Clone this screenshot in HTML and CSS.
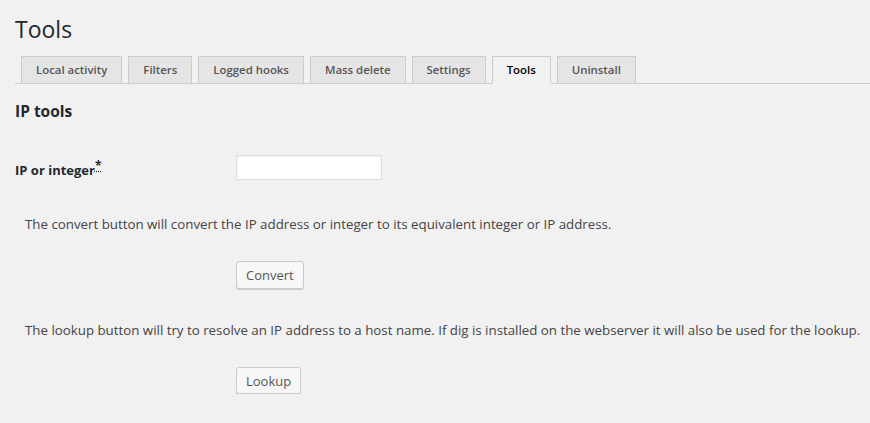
FILE: index.html
```html
<!DOCTYPE html>
<html>
<head>
<meta charset="utf-8">
<link rel="stylesheet" href="styles.css">
</head>
<body>
<div class="wrap">
  <h1 class="title">Tools</h1>
  <nav class="tabs">
    <a class="tab">Local activity</a>
    <a class="tab">Filters</a>
    <a class="tab">Logged hooks</a>
    <a class="tab">Mass delete</a>
    <a class="tab">Settings</a>
    <a class="tab active">Tools</a>
    <a class="tab">Uninstall</a>
  </nav>
  <h2 class="section">IP tools</h2>
  <div class="field">
    <label class="label">IP or integer<abbr class="req" title="required">*</abbr></label>
    <input class="input" type="text">
  </div>
  <p class="desc first">The convert button will convert the IP address or integer to its equivalent integer or IP address.</p>
  <div class="btnrow"><button class="btn convert">Convert</button></div>
  <p class="desc second">The lookup button will try to resolve an IP address to a host name. If dig is installed on the webserver it will also be used for the lookup.</p>
  <div class="btnrow"><button class="btn lookup">Lookup</button></div>
</div>
</body>
</html>
```

FILE: styles.css
```css
html, body {
  margin: 0;
  padding: 0;
  background: #f1f1f1;
}
body {
  font-family: "Open Sans", "Noto Sans", sans-serif;
  color: #444;
  font-size: 13.3px;
}
.wrap {
  padding: 0 0 0 15px;
}
.title {
  margin: 0;
  padding-top: 14px;
  font-size: 23px;
  font-weight: 400;
  line-height: 30px;
  color: #23282d;
}
.tabs {
  display: flex;
  margin-top: 12px;
  padding-left: 6px;
  border-bottom: 1px solid #ccc;
  height: 27px;
  align-items: flex-end;
  gap: 6px;
}
.tab {
  box-sizing: border-box;
  height: 28px;
  margin-bottom: -1px;
  display: flex;
  align-items: center;
  padding: 0 14px 1px;
  border: 1px solid #ccc;
  background: #e5e5e5;
  color: #555;
  font-size: 11.4px;
  font-weight: 600;
}
.tab.active {
  background: #f1f1f1;
  color: #000;
  border-bottom-color: #f1f1f1;
}
.section {
  margin: 16px 0 0;
  font-size: 15.5px;
  font-weight: 700;
  color: #23282d;
  line-height: 22px;
}
.field {
  display: flex;
  align-items: center;
  margin-top: 33px;
  height: 25px;
}
.label {
  width: 221px;
  font-weight: 700;
  color: #23282d;
  font-size: 13px;
}
.req {
  text-decoration: underline dotted;
  text-decoration-color: #23282d;
  vertical-align: 5px;
  font-size: 12px;
}
.input {
  box-sizing: border-box;
  width: 146px;
  height: 25px;
  margin: 0;
  border: 1px solid #ddd;
  background: #fff;
  box-shadow: inset 0 1px 2px rgba(0,0,0,0.07);
}
.desc {
  margin: 0 0 0 10px;
  line-height: 20px;
}
.desc.first { margin-top: 34px; }
.desc.second { margin-top: 31px; }
.btnrow {
  padding-left: 221px;
  margin-top: 27px;
}
.btn {
  box-sizing: border-box;
  height: 28px;
  padding: 0 9px;
  border: 1px solid #ccc;
  border-radius: 3px;
  background: #f7f7f7;
  box-shadow: 0 1px 0 #ccc;
  color: #555;
  font-family: inherit;
  font-size: 13px;
}
.lookup { height: 27px; }
```
